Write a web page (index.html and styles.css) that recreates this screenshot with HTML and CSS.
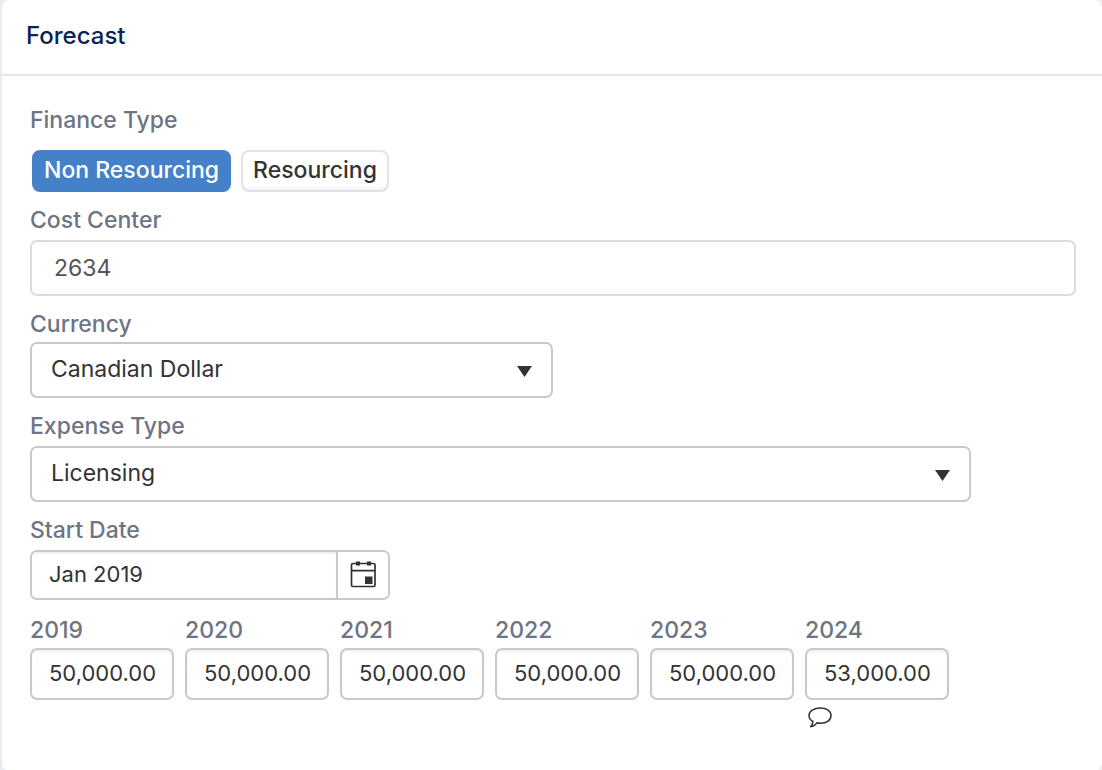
FILE: index.html
```html
<!DOCTYPE html>
<html lang="en">
<head>
<meta charset="utf-8">
<meta name="viewport" content="width=device-width, initial-scale=1">
<title>Forecast</title>
<link rel="stylesheet" href="styles.css">
</head>
<body>
<main class="card">
  <header class="card-header"><h1 class="card-title">Forecast</h1></header>
  <form class="form">
    <div class="field field-roomy" role="group" aria-labelledby="finance-label">
      <span class="label" id="finance-label">Finance Type</span>
      <div class="toggle">
        <button type="button" class="option option-active" aria-pressed="true">Non Resourcing</button>
        <button type="button" class="option" aria-pressed="false">Resourcing</button>
      </div>
    </div>
    <div class="field">
      <label class="label" for="cost-center">Cost Center</label>
      <input class="control control-soft" id="cost-center" type="text" value="2634">
    </div>
    <div class="field field-tight">
      <label class="label" for="currency">Currency</label>
      <div class="select select-half">
        <select class="control" id="currency"><option>Canadian Dollar</option></select>
        <svg class="arrow" viewBox="0 0 15 11" aria-hidden="true"><path d="M0 0h15L7.500 11z"/></svg>
      </div>
    </div>
    <div class="field">
      <label class="label" for="expense">Expense Type</label>
      <div class="select select-wide">
        <select class="control" id="expense"><option>Licensing</option></select>
        <svg class="arrow" viewBox="0 0 15 11" aria-hidden="true"><path d="M0 0h15L7.500 11z"/></svg>
      </div>
    </div>
    <div class="field">
      <label class="label" for="start">Start Date</label>
      <div class="date">
        <input class="date-input" id="start" type="text" value="Jan 2019">
        <button class="date-button" type="button" aria-label="Open calendar">
          <svg class="calendar" viewBox="0 0 26 27" aria-hidden="true">
            <rect x="1.500" y="2.500" width="23.500" height="23" rx="1.500" fill="none" stroke="#333" stroke-width="1.700"/>
            <path d="M1.500 9.700h23.500" stroke="#333" stroke-width="1.700"/>
            <path d="M6 0.500h4v4h-4zM17 0.500h4v4h-4zM15 15.500h7.500v7.500h-7.500z" fill="#333"/>
          </svg>
        </button>
      </div>
    </div>
    <div class="years">
      <div class="field field-tight"><label class="label" for="y2019">2019</label><input class="amount" id="y2019" type="text" value="50,000.00"></div>
      <div class="field field-tight"><label class="label" for="y2020">2020</label><input class="amount" id="y2020" type="text" value="50,000.00"></div>
      <div class="field field-tight"><label class="label" for="y2021">2021</label><input class="amount" id="y2021" type="text" value="50,000.00"></div>
      <div class="field field-tight"><label class="label" for="y2022">2022</label><input class="amount" id="y2022" type="text" value="50,000.00"></div>
      <div class="field field-tight"><label class="label" for="y2023">2023</label><input class="amount" id="y2023" type="text" value="50,000.00"></div>
      <div class="field field-tight"><label class="label" for="y2024">2024</label><input class="amount" id="y2024" type="text" value="53,000.00">
        <button class="comment" type="button" aria-label="Comment">
          <svg class="bubble" viewBox="0 0 24 21" aria-hidden="true"><path d="M12.500 1C18.800 1 23 4 23 8.500s-4.300 7.800-10.300 7.800c-1.500 0-2.600-.1-3.800-.5C7.400 18 5.300 19.500 2.600 19.700c1.600-1.500 2.400-3.200 2.300-5.200C2.500 13.100 1 11 1 8.500 1 4 5.800 1 12.500 1z" fill="none" stroke="#333" stroke-width="1.500" stroke-linejoin="round"/></svg>
        </button>
      </div>
    </div>
  </form>
</main>
</body>
</html>
```
FILE: styles.css
```css
* { box-sizing: border-box; }

body {
  margin: 0;
  background: #e9edf2;
  font-family: Inter, "Liberation Sans", sans-serif;
  color: #333;
}

.card {
  min-height: 100vh;
  margin-left: 2px;
  background: #fff;
  border-radius: 8px;
}

.card-header {
  padding: 20px 24px 22px;
  border-bottom: 2px solid #e4e5eb;
}

.card-title {
  margin: 0;
  font-size: 24px;
  line-height: 32px;
  font-weight: 500;
  color: #0b2451;
}

.form {
  display: flex;
  flex-direction: column;
  gap: 14px;
  padding: 30px 26px 40px 28px;
}

.field {
  display: flex;
  flex-direction: column;
  align-items: flex-start;
  gap: 6px;
}

.field-roomy { gap: 16px; }
.field-tight { gap: 4px; }

.label {
  font-size: 23px;
  line-height: 28px;
  font-weight: 500;
  color: #6d7485;
}

button, input, select { font-family: inherit; }

.toggle {
  display: flex;
  gap: 10px;
  padding-left: 2px;
}

.option {
  height: 42px;
  padding: 0 10px 3px;
  border: 2px solid #e2e2e9;
  border-radius: 8px;
  background: #fff;
  box-shadow: inset 0 -2px 2px #f4f4f6;
  color: #333;
  font-size: 23px;
  font-weight: 500;
}

.option-active {
  border-color: #4581c8;
  background: #4581c8;
  box-shadow: none;
  color: #fff;
}

.control {
  width: 100%;
  height: 56px;
  padding: 0 19px 2px;
  border: 2px solid #c9c9c9;
  border-radius: 7px;
  background: #fff;
  color: #333;
  font-size: 23px;
  appearance: none;
}

.control-soft {
  padding: 0 22px 1px;
  border-color: #d8dde3;
  color: #555;
}

.select { position: relative; }
.select-half { width: 50%; }
.select-wide { width: 90%; }

.arrow {
  position: absolute;
  top: 24px;
  right: 21px;
  width: 15px;
  height: 11px;
  fill: #333;
  pointer-events: none;
}

.date {
  display: flex;
  width: 360px;
  height: 50px;
  border: 2px solid #c9c9c9;
  border-radius: 7px;
  overflow: hidden;
}

.date-input {
  flex: 1;
  min-width: 0;
  padding: 0 17px 2px;
  border: 0;
  box-shadow: inset 0 2px 2px #f0f0f0;
  color: #333;
  font-size: 22px;
}

.date-button {
  display: grid;
  place-items: center;
  width: 52px;
  padding: 0 0 2px;
  border: 0;
  border-left: 2px solid #c9c9c9;
  background: #fff;
}

.calendar { width: 26px; height: 27px; }

.years {
  display: grid;
  grid-template-columns: repeat(6, 144px);
  gap: 11px;
  padding-top: 2px;
}

.amount {
  width: 100%;
  height: 52px;
  padding: 0 8px 3px 17px;
  border: 2px solid #c9c9c9;
  border-radius: 7px;
  background: #fff;
  box-shadow: inset 0 2px 2px #f0f0f0;
  color: #333;
  font-size: 22px;
}

.comment {
  padding: 3px;
  border: 0;
  background: none;
}

.bubble {
  display: block;
  width: 24px;
  height: 21px;
}
```
